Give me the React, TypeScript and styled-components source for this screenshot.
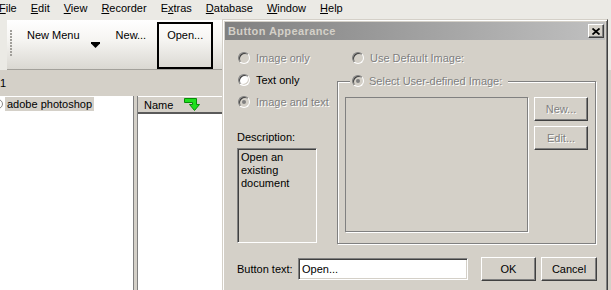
import * as React from 'react'
import styled, { createGlobalStyle } from 'styled-components'

const GlobalStyle = createGlobalStyle`
  html, body {
    margin: 0;
    padding: 0;
    background: #d4d0c8;
  }
  body {
    font-family: "Liberation Sans", Arial, sans-serif;
    font-size: 11px;
    color: #000;
  }
`

const Screen = styled.div`
  position: relative;
  width: 611px;
  height: 290px;
  overflow: hidden;
  background: #d4d0c8;
`

const TopDock = styled.div`
  background: #ebeae5;
`

const MenuBar = styled.div`
  display: flex;
  align-items: center;
  gap: 14px;
  height: 17px;
  margin-left: -1px;
`

const MenuItem = styled.span`
  line-height: 13px;
  white-space: nowrap;
`

const ToolbarRow = styled.div`
  padding: 3px 0 0 7px;
`

const Toolbar = styled.div`
  display: flex;
  align-items: flex-start;
  width: 300px;
  height: 50px;
  box-sizing: border-box;
  padding-top: 2px;
  background: linear-gradient(#ffffff 0%, #f6f5f2 40%, #dad8d2 100%);
  border-bottom: 1px solid #a3a19b;
`

const Grip = styled.div`
  width: 2px;
  height: 26px;
  margin: 8px 7px 0 3px;
  background: repeating-linear-gradient(#a19f9a 0 2px, transparent 2px 3px);
`

const ToolButton = styled.div<{ $pressed?: boolean }>`
  display: flex;
  align-items: flex-start;
  height: 47px;
  box-sizing: border-box;
  padding: 5px ${p => (p.$pressed ? 8 : 6)}px 0;
  margin-left: ${p => (p.$pressed ? 3 : 0)}px;
  border: 2px solid ${p => (p.$pressed ? '#000' : 'transparent')};
  line-height: 13px;
  white-space: nowrap;
`

const DropArrow = styled.svg`
  margin: 13px 0 0 11px;
`

const StatusRow = styled.div`
  height: 26px;
  display: flex;
  align-items: center;
`

const Panels = styled.div`
  display: flex;
  height: 194px;
`

const TreePanel = styled.div`
  width: 133px;
  background: #fff;
  border-right: 1px solid #808080;
  padding-top: 1px;
`

const Splitter = styled.div`
  width: 3px;
`

const ListPanel = styled.div`
  width: 84px;
  background: #fff;
  border-left: 1px solid #808080;
  border-right: 1px solid #ecebe8;
`

const TreeRow = styled.div`
  display: flex;
  align-items: center;
  height: 14px;
`

const TreeIcon = styled.span`
  width: 8px;
  height: 8px;
  margin-left: -7px;
  border: 1px solid #8a8a8a;
  border-radius: 50%;
  margin-right: 2px;
`

const TreeLabel = styled.span`
  background: #d4d0c8;
  padding: 0 2px;
  line-height: 14px;
`

const ListHeader = styled.div`
  display: flex;
  align-items: center;
  height: 18px;
  box-sizing: border-box;
  padding-left: 6px;
  background: #d4d0c8;
  border-top: 1px solid #fff;
  border-bottom: 2px solid #5a5a5a;
`

const SortIcon = styled.svg`
  margin-left: 11px;
`

const Dialog = styled.div`
  position: absolute;
  left: 222px;
  top: 19px;
  width: 386px;
  height: 290px;
  box-sizing: border-box;
  padding: 2px;
  background: #d4d0c8;
  border: 1px solid;
  border-color: #d4d0c8 #404040 #404040 #d4d0c8;
  box-shadow: inset 1px 1px #fff, inset -1px -1px #808080;
`

const TitleBar = styled.div`
  display: flex;
  align-items: center;
  justify-content: space-between;
  height: 18px;
  padding: 0 1px 0 3px;
  background: linear-gradient(90deg, #808080, #c0c0c0);
  color: #d4d0c8;
  font-weight: bold;
  letter-spacing: 0.4px;
`

const CloseButton = styled.div`
  width: 16px;
  height: 14px;
  box-sizing: border-box;
  display: flex;
  align-items: center;
  justify-content: center;
  background: #d4d0c8;
  border: 1px solid;
  border-color: #fff #404040 #404040 #fff;
  box-shadow: inset -1px -1px #808080;
`

const Body = styled.div`
  padding: 7px 8px 0 12px;
`

const Columns = styled.div`
  display: grid;
  grid-template-columns: 80px 259px;
  column-gap: 20px;
`

const Column = styled.div`
  display: flex;
  flex-direction: column;
`

const RadioRow = styled.div<{ $indent?: number }>`
  display: flex;
  align-items: center;
  height: 22px;
  gap: 6px;
  padding-left: ${p => p.$indent ?? 1}px;
  white-space: nowrap;
`

const RadioDot = styled.span<{ $checked?: boolean; $disabled?: boolean }>`
  position: relative;
  width: 12px;
  height: 12px;
  box-sizing: border-box;
  border-radius: 50%;
  border: 1px solid;
  border-color: #808080 #fff #fff #808080;
  background: ${p => (p.$disabled ? '#d4d0c8' : '#fff')};
  box-shadow: inset 1px 1px #404040, inset -1px -1px #d4d0c8;
  flex: none;
  &::after {
    content: '';
    display: ${p => (p.$checked ? 'block' : 'none')};
    position: absolute;
    left: 3px;
    top: 3px;
    width: 4px;
    height: 4px;
    border-radius: 50%;
    background: ${p => (p.$disabled ? '#808080' : '#000')};
  }
`

const Label = styled.span<{ $disabled?: boolean }>`
  line-height: 13px;
  color: ${p => (p.$disabled ? '#808080' : '#000')};
  text-shadow: ${p => (p.$disabled ? '1px 1px 0 #fff' : 'none')};
  white-space: nowrap;
`

const DescLabel = styled(Label)`
  margin-top: 18px;
  margin-bottom: 4px;
`

const Sunken = styled.div<{ $white?: boolean }>`
  box-sizing: border-box;
  border: 1px solid;
  border-color: #808080 #fff #fff #808080;
  box-shadow: inset 1px 1px #404040, inset -1px -1px #d4d0c8;
  background: ${p => (p.$white ? '#fff' : '#d4d0c8')};
`

const DescBox = styled(Sunken)`
  width: 80px;
  height: 95px;
  padding: 2px 3px;
  line-height: 13px;
`

const GroupBox = styled.div`
  position: relative;
  margin-top: 12px;
  display: flex;
  gap: 6px;
  padding: 15px 7px 11px 7px;
  border: 1px solid #808080;
  box-shadow: inset 1px 1px #fff, 1px 1px #fff;
`

const Legend = styled.div`
  position: absolute;
  left: 12px;
  top: -8px;
  display: flex;
  align-items: center;
  gap: 5px;
  padding: 0 6px 0 2px;
  background: #d4d0c8;
  height: 14px;
`

const ImageWell = styled.div`
  width: 183px;
  height: 135px;
  box-sizing: border-box;
  border: 1px solid #808080;
  box-shadow: 1px 1px #fff;
`

const ButtonStack = styled.div`
  display: flex;
  flex-direction: column;
  gap: 5px;
`

const Button = styled.div<{ $width: number; $disabled?: boolean }>`
  width: ${p => p.$width}px;
  height: 24px;
  box-sizing: border-box;
  display: flex;
  align-items: center;
  justify-content: center;
  background: #d4d0c8;
  border: 1px solid;
  border-color: #fff #404040 #404040 #fff;
  box-shadow: inset -1px -1px #808080;
  color: ${p => (p.$disabled ? '#808080' : '#000')};
  text-shadow: ${p => (p.$disabled ? '1px 1px 0 #fff' : 'none')};
`

const BottomRow = styled.div`
  display: flex;
  align-items: center;
  margin-top: 13px;
`

const FieldLabel = styled.span`
  width: 61px;
  line-height: 13px;
`

const TextField = styled(Sunken)`
  width: 170px;
  height: 22px;
  padding: 0 3px;
  display: flex;
  align-items: center;
  margin-right: 13px;
`

const ButtonPair = styled.div`
  display: flex;
  gap: 5px;
`

const menus: [string, string, string][] = [
  ['', 'F', 'ile'],
  ['', 'E', 'dit'],
  ['', 'V', 'iew'],
  ['', 'R', 'ecorder'],
  ['E', 'x', 'tras'],
  ['', 'D', 'atabase'],
  ['', 'W', 'indow'],
  ['', 'H', 'elp'],
]

function Radio(props: { label: string; checked?: boolean; disabled?: boolean; indent?: number }) {
  return (
    <RadioRow $indent={props.indent}>
      <RadioDot $checked={props.checked} $disabled={props.disabled} />
      <Label $disabled={props.disabled}>{props.label}</Label>
    </RadioRow>
  )
}

export default function App() {
  return (
    <Screen>
      <GlobalStyle />
      <TopDock>
        <MenuBar>
          {menus.map(([pre, key, rest]) => (
            <MenuItem key={key}>
              {pre}
              <u>{key}</u>
              {rest}
            </MenuItem>
          ))}
        </MenuBar>
        <ToolbarRow>
          <Toolbar>
            <Grip />
            <ToolButton>
              New Menu
              <DropArrow width="9" height="6" viewBox="0 0 9 6">
                <polygon points="0,0 9,0 9,1.5 4.5,6 0,1.5" fill="#000" />
              </DropArrow>
            </ToolButton>
            <ToolButton>New...</ToolButton>
            <ToolButton $pressed={true}>Open...</ToolButton>
          </Toolbar>
        </ToolbarRow>
      </TopDock>

      <StatusRow>1</StatusRow>

      <Panels>
        <TreePanel>
          <TreeRow>
            <TreeIcon />
            <TreeLabel>adobe photoshop</TreeLabel>
          </TreeRow>
        </TreePanel>
        <Splitter />
        <ListPanel>
          <ListHeader>
            Name
            <SortIcon width="17" height="13" viewBox="0 0 17 13">
              <polygon
                points="0.5,0.5 12.5,0.5 12.5,6.5 15.5,6.5 10.5,12.5 5.5,6.5 8.5,6.5 8.5,4.5 0.5,4.5"
                fill="#1ee01e"
                stroke="#0a8a0a"
                strokeWidth="1"
              />
            </SortIcon>
          </ListHeader>
        </ListPanel>
      </Panels>

      <Dialog>
        <TitleBar>
          Button Appearance
          <CloseButton>
            <svg width="8" height="7" viewBox="0 0 8 7">
              <path d="M0.5 0.5 L7.5 6.5 M7.5 0.5 L0.5 6.5" stroke="#000" strokeWidth="1.8" />
            </svg>
          </CloseButton>
        </TitleBar>
        <Body>
          <Columns>
            <Column>
              <Radio label="Image only" disabled={true} />
              <Radio label="Text only" />
              <Radio label="Image and text" checked={true} disabled={true} />
              <DescLabel>Description:</DescLabel>
              <DescBox>Open an existing document</DescBox>
            </Column>
            <Column>
              <Radio label="Use Default Image:" disabled={true} indent={15} />
              <GroupBox>
                <Legend>
                  <RadioDot $checked={true} $disabled={true} />
                  <Label $disabled={true}>Select User-defined Image:</Label>
                </Legend>
                <ImageWell />
                <ButtonStack>
                  <Button $width={54} $disabled={true}>New...</Button>
                  <Button $width={54} $disabled={true}>Edit...</Button>
                </ButtonStack>
              </GroupBox>
            </Column>
          </Columns>
          <BottomRow>
            <FieldLabel>Button text:</FieldLabel>
            <TextField $white={true}>Open...</TextField>
            <ButtonPair>
              <Button $width={55}>OK</Button>
              <Button $width={56}>Cancel</Button>
            </ButtonPair>
          </BottomRow>
        </Body>
      </Dialog>
    </Screen>
  )
}
